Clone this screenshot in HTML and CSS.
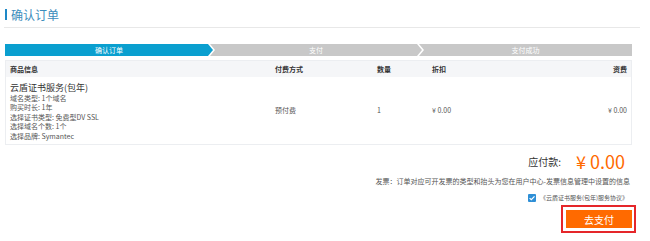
FILE: index.html
```html
<!DOCTYPE html>
<html lang="zh-CN">
<head>
    <meta charset="UTF-8">
    <title>确认订单</title>
    <link rel="stylesheet" href="styles.css">
</head>
<body>
    <div class="page">
        <div class="page-title"><span class="title-mark"></span>确认订单</div>

        <div class="steps">
            <div class="step step-first active">确认订单</div>
            <div class="step step-mid">支付</div>
            <div class="step step-last">支付成功</div>
        </div>

        <div class="order-table">
            <div class="row head">
                <div class="col">商品信息</div>
                <div class="col">付费方式</div>
                <div class="col">数量</div>
                <div class="col">折扣</div>
                <div class="col col-right">资费</div>
            </div>
            <div class="row body">
                <div class="col product">
                    <div class="product-name">云盾证书服务(包年)</div>
                    <div>域名类型: 1个域名</div>
                    <div>购买时长: 1年</div>
                    <div>选择证书类型: 免费型DV SSL</div>
                    <div>选择域名个数: 1个</div>
                    <div>选择品牌: Symantec</div>
                </div>
                <div class="col mid">预付费</div>
                <div class="col mid">1</div>
                <div class="col mid">¥ 0.00</div>
                <div class="col mid col-right">¥ 0.00</div>
            </div>
        </div>

        <div class="summary">
            <div class="total">
                <span class="total-label">应付款:</span>
                <span class="total-amount">¥ 0.00</span>
            </div>
            <div class="invoice-note">发票：订单对应可开发票的类型和抬头为您在用户中心-发票信息管理中设置的信息</div>
            <div class="agreement">
                <span class="checkbox">
                    <svg width="8" height="8" viewBox="0 0 8 8"><path d="M1.6 4.1 L3.3 5.7 L6.5 2.3" fill="none" stroke="#fff" stroke-width="1.2"/></svg>
                </span>
                <span>《云盾证书服务(包年)服务协议》</span>
            </div>
            <div class="pay-mark">
                <button class="pay-button">去支付</button>
            </div>
        </div>
    </div>
</body>
</html>
```

FILE: styles.css
```css
body {
    margin: 0;
    font-family: "Noto Sans CJK SC", "Liberation Sans", sans-serif;
    background-color: #fff;
    color: #333;
}
.page {
    width: 627px;
    padding-left: 5px;
}
.page-title {
    display: flex;
    align-items: center;
    gap: 4px;
    height: 26px;
    padding-top: 1px;
    font-size: 12px;
    color: #3c8dbc;
    border-bottom: 1px solid #e8e8e8;
    width: 635px;
    padding-left: 1px;
    margin-left: -1px;
}
.title-mark {
    width: 2px;
    height: 11px;
    background-color: #1e88c7;
}
.steps {
    display: flex;
    margin-top: 16px;
    height: 12px;
}
.step {
    display: flex;
    align-items: center;
    justify-content: center;
    height: 12px;
    font-size: 7px;
    color: #fff;
    background-color: #c8c8c8;
}
.step.active {
    background-color: #0a9fcf;
}
.step-first {
    width: 208px;
    clip-path: polygon(0 0, calc(100% - 5px) 0, 100% 50%, calc(100% - 5px) 100%, 0 100%);
}
.step-mid {
    width: 212px;
    margin-left: -3px;
    clip-path: polygon(0 0, calc(100% - 5px) 0, 100% 50%, calc(100% - 5px) 100%, 0 100%, 5px 50%);
}
.step-last {
    flex: 1;
    margin-left: -3px;
    clip-path: polygon(0 0, 100% 0, 100% 100%, 0 100%, 5px 50%);
}
.order-table {
    margin-top: 4px;
    border: 1px solid #eceef1;
}
.row {
    display: grid;
    grid-template-columns: 265px 102px 55px 1fr 1fr;
    padding: 0 4px;
}
.head {
    height: 16px;
    align-items: center;
    background-color: #f5f6f8;
    font-size: 7px;
    font-weight: bold;
    color: #333;
}
.body {
    height: 63px;
    padding-top: 4px;
    font-size: 7px;
    color: #555;
}
.col-right {
    text-align: right;
}
.mid {
    align-self: center;
    margin-top: -6px;
}
.product {
    line-height: 9.4px;
}
.product-name {
    font-size: 9px;
    line-height: 13px;
    color: #333;
}
.summary {
    display: flex;
    flex-direction: column;
    align-items: flex-end;
}
.total {
    display: flex;
    align-items: center;
    gap: 15px;
    margin-top: 3px;
    margin-right: 7px;
}
.total-label {
    font-size: 10px;
    color: #333;
}
.total-amount {
    font-size: 18px;
    color: #ff6a00;
}
.invoice-note {
    margin-top: 2px;
    font-size: 7px;
    color: #555;
    margin-right: 2px;
}
.agreement {
    display: flex;
    align-items: center;
    gap: 4px;
    margin-top: 7px;
    margin-right: 4px;
    font-size: 6px;
    color: #555;
}
.checkbox {
    display: flex;
    width: 8px;
    height: 8px;
    background-color: #2e8fd6;
    border-radius: 1px;
}
.pay-mark {
    margin-top: 3px;
    margin-right: -4px;
    border: 2px solid #e5262a;
    padding: 3px 2px 3px 3px;
}
.pay-button {
    display: block;
    width: 66px;
    height: 18px;
    padding: 0;
    border: none;
    background-color: #ff6a00;
    color: #fff;
    font-family: "Noto Sans CJK SC", sans-serif;
    font-size: 10px;
}
```
